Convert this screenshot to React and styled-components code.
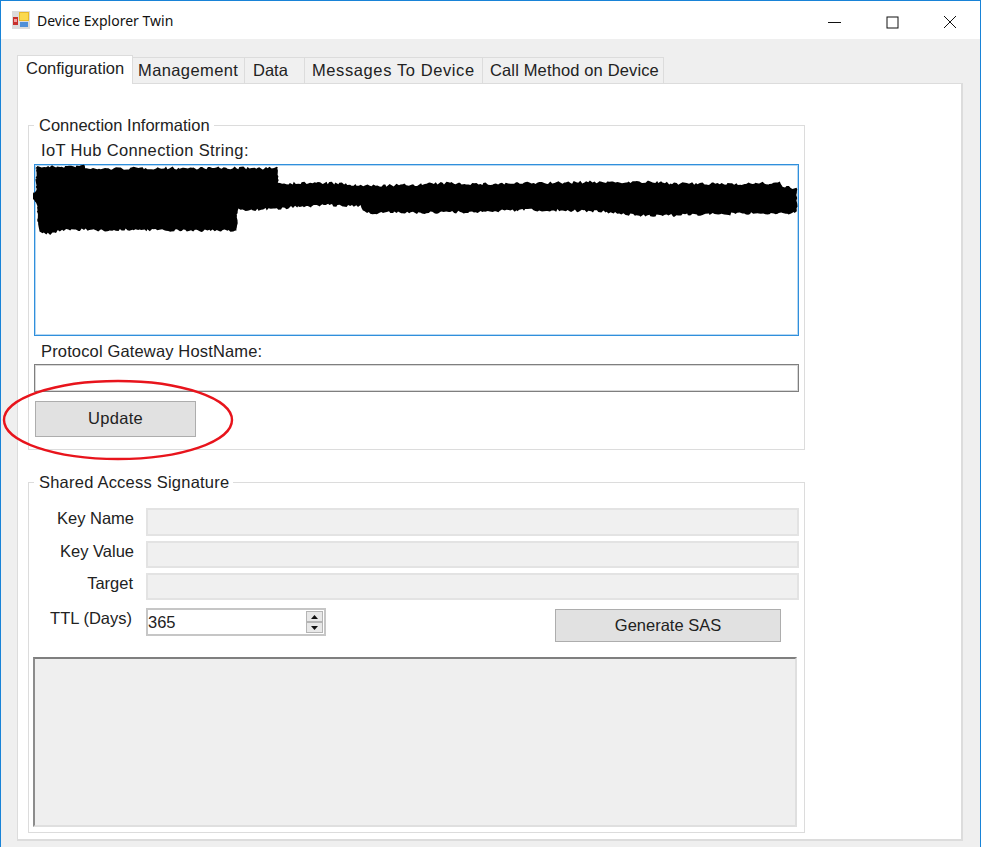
import React from 'react';
import styled, { createGlobalStyle } from 'styled-components';

const GlobalStyle = createGlobalStyle`
    html, body { margin: 0; padding: 0; background: #fff; }
    body { font-family: "Liberation Sans", Arial, sans-serif; font-size: 16px; color: #222; }
`;

const Window = styled.div`
    box-sizing: border-box;
    width: 981px;
    height: 847px;
    border: 1px solid #1883d7;
    border-bottom: none;
    background: #efefef;
    display: flex;
    flex-direction: column;
    overflow: hidden;
`;

const TitleBar = styled.div`
    height: 38px;
    background: #fff;
    display: flex;
    align-items: center;
    padding: 0 1px 0 11px;
    flex-shrink: 0;
`;

const Title = styled.span`
    margin-left: 7px;
    font-family: "Noto Sans", sans-serif;
    font-size: 14px;
    color: #111;
    flex: 1;
`;

const WinButton = styled.div`
    box-sizing: border-box;
    width: 58px;
    height: 38px;
    padding-top: 4px;
    display: flex;
    align-items: center;
    justify-content: center;
`;

const Body = styled.div`
    padding: 15px 18px 0 16px;
`;

const TabRow = styled.div`
    display: flex;
    align-items: flex-end;
    height: 29px;
`;

const Tab = styled.div`
    box-sizing: border-box;
    width: ${p => p.$w}px;
    height: ${p => (p.$active ? 29 : 26)}px;
    background: ${p => (p.$active ? '#fff' : '#f0f0f0')};
    border: 1px solid #dcdcdc;
    border-bottom: none;
    border-left-width: ${p => (p.$active || p.$first ? 1 : 0)}px;
    font-size: 16.5px;
    letter-spacing: ${p => p.$track || 0}px;
    line-height: ${p => (p.$active ? 25 : 24)}px;
    padding-left: ${p => p.$pad}px;
    white-space: nowrap;
    color: #222;
    position: relative;
    z-index: ${p => (p.$active ? 1 : 0)};
    margin-bottom: ${p => (p.$active ? -1 : 0)}px;
`;

const Panel = styled.div`
    box-sizing: border-box;
    width: 946px;
    height: 758px;
    background: #fff;
    border: 1px solid #dcdcdc;
    border-width: 1px 2px 2px 1px;
    padding: 32px 0 0 10px;
`;

const Group = styled.fieldset`
    box-sizing: border-box;
    width: 777px;
    height: ${p => p.$h}px;
    margin: ${p => p.$top}px 0 0;
    padding: 0 5px;
    border: 1px solid #dcdcdc;
    position: relative;
    display: flex;
    flex-direction: column;
`;

const Legend = styled.legend`
    margin-left: 0;
    padding: 0 4px 0 5px;
    font-size: 16.5px;
    letter-spacing: ${p => p.$track || 0}px;
    line-height: 18px;
    color: #222;
`;

const FieldLabel = styled.div`
    font-size: 16.5px;
    letter-spacing: ${p => p.$track || 0}px;
    line-height: 20px;
    margin-top: ${p => p.$top}px;
    padding-left: 7px;
    color: #222;
`;

const StringBox = styled.div`
    box-sizing: border-box;
    width: 765px;
    height: 172px;
    margin-top: 4px;
    background: #fff;
    border: 1px solid #2f8fdc;
    box-shadow: inset 0 0 0 1px rgba(47, 143, 220, 0.35);
    position: relative;
`;

const Redaction = styled.svg`
    position: absolute;
    left: -2px;
    top: -1px;
`;

const HostInput = styled.div`
    box-sizing: border-box;
    width: 765px;
    height: 28px;
    margin-top: 3px;
    background: #fff;
    border: 1px solid #7f7f7f;
    box-shadow: inset 0 0 0 1px rgba(127, 127, 127, 0.3);
`;

const Button = styled.div`
    box-sizing: border-box;
    width: ${p => p.$w}px;
    height: ${p => p.$h}px;
    margin-top: ${p => p.$top || 0}px;
    padding-bottom: ${p => p.$lift || 0}px;
    background: #e1e1e1;
    border: 1px solid #adadad;
    display: flex;
    align-items: center;
    justify-content: center;
    font-size: 16.5px;
    letter-spacing: ${p => p.$track || 0}px;
    color: #222;
`;

const UpdateRow = styled.div`
    margin: 9px 0 0 1px;
`;

const Ellipse = styled.svg`
    position: absolute;
    left: -31px;
    top: 239px;
    pointer-events: none;
`;

const FormRow = styled.div`
    display: grid;
    grid-template-columns: 100px 1fr;
    column-gap: 12px;
    align-items: center;
    height: ${p => p.$h}px;
    margin-top: ${p => p.$top}px;
    width: 765px;
`;

const RowLabel = styled.div`
    font-size: 16.5px;
    text-align: right;
    color: #222;
    white-space: nowrap;
    position: relative;
    top: ${p => p.$nudge || 0}px;
    left: ${p => p.$shift || 0}px;
`;

const ReadOnly = styled.div`
    box-sizing: border-box;
    height: ${p => p.$h}px;
    background: #f0f0f0;
    border: 2px solid #e3e3e3;
`;

const SpinRow = styled.div`
    display: flex;
    align-items: flex-start;
    justify-content: space-between;
    padding-right: 18px;
`;

const Spinner = styled.div`
    box-sizing: border-box;
    width: 180px;
    height: 28px;
    background: #fff;
    border: 2px solid #c6c6c6;
    display: flex;
    align-items: center;
    justify-content: space-between;
    padding-right: 1px;
    font-size: 16.5px;
    color: #222;
`;

const SpinButtons = styled.div`
    display: flex;
    flex-direction: column;
    width: 17px;
`;

const SpinButton = styled.div`
    height: 11px;
    background: #e8e8e8;
    border: 1px solid #b5b5b5;
    box-sizing: border-box;
    display: flex;
    align-items: center;
    justify-content: center;
`;

const Output = styled.div`
    box-sizing: border-box;
    width: 764px;
    height: 170px;
    margin: 15px 0 0 -1px;
    background: #efefef;
    border: 2px solid #dfdfdf;
    border-top-color: #7f7f7f;
    border-left-color: #8c8c8c;
`;

const tabs = [
    { label: 'Configuration', w: 116, pad: 8, active: true },
    { label: 'Management', w: 112, pad: 5, track: 0.4 },
    { label: 'Data', w: 60, pad: 8 },
    { label: 'Messages To Device', w: 178, pad: 7, track: 0.6 },
    { label: 'Call Method on Device', w: 181, pad: 7, track: 0.14 },
];

// scribbled-over connection string, outline in page coordinates
const blob = [
    [36, 167], [85, 166], [85, 169], [150, 168], [244, 168], [278, 168], [278, 183], [330, 183], [365, 186],
    [405, 185], [450, 183], [480, 184], [590, 182], [645, 182], [700, 184], [780, 183], [783, 187], [797, 188],
    [797, 213], [730, 214], [645, 216], [595, 211], [520, 210], [480, 212], [365, 213], [360, 206], [320, 205],
    [275, 209], [237, 210], [237, 231], [130, 230], [60, 230], [50, 234], [40, 232], [38, 225], [37, 205],
    [32, 197], [36, 190],
];

const roughen = points => {
    let seed = 7;
    const rnd = () => {
        seed = (seed * 16807) % 2147483647;
        return seed / 2147483647;
    };
    const out = [];
    points.forEach((p, i) => {
        const q = points[(i + 1) % points.length];
        const steps = Math.max(1, Math.round(Math.hypot(q[0] - p[0], q[1] - p[1]) / 2));
        for (let s = 0; s < steps; s++) {
            const t = s / steps;
            const x = p[0] - 33 + (q[0] - p[0]) * t + (rnd() - 0.5) * 1.5;
            const y = p[1] - 164 + (q[1] - p[1]) * t + (rnd() - 0.5) * 3;
            out.push(`${x.toFixed(1)},${y.toFixed(1)}`);
        }
    });
    return out.join(' ');
};

const AppIcon = () => (
    <svg width="18" height="18" viewBox="0 0 18 18">
        <rect x="0" y="0" width="18" height="18" fill="#dcdcdc" />
        <rect x="7" y="1" width="10" height="9" fill="#e8b92c" />
        <rect x="8" y="2" width="8" height="7" fill="#fbd94f" />
        <rect x="1" y="6" width="5" height="8" fill="#c8302c" />
        <rect x="2" y="8" width="3" height="3" fill="#f2a0a0" />
        <rect x="8" y="11" width="8" height="5" fill="#4f8fd8" />
    </svg>
);

const App = () => (
    <>
        <GlobalStyle />
        <Window>
            <TitleBar>
                <AppIcon />
                <Title>Device Explorer Twin</Title>
                <WinButton>
                    <svg width="13" height="13" viewBox="0 0 13 13"><path d="M0 6.5H13" stroke="#111" /></svg>
                </WinButton>
                <WinButton>
                    <svg width="13" height="13" viewBox="0 0 13 13"><rect x="1" y="1" width="11" height="11" fill="none" stroke="#111" /></svg>
                </WinButton>
                <WinButton>
                    <svg width="14" height="14" viewBox="0 0 14 14"><path d="M1 1L13 13M13 1L1 13" stroke="#111" /></svg>
                </WinButton>
            </TitleBar>
            <Body>
                <TabRow>
                    {tabs.map((t, i) => (
                        <Tab key={t.label} $w={t.w} $pad={t.pad} $track={t.track} $active={t.active} $first={i === 0}>{t.label}</Tab>
                    ))}
                </TabRow>
                <Panel>
                    <Group $h={334} $top={0}>
                        <Legend>Connection Information</Legend>
                        <FieldLabel $top={6} $track={0.35}>IoT Hub Connection String:</FieldLabel>
                        <StringBox>
                            <Redaction width="770" height="75" viewBox="0 0 770 75">
                                <defs>
                                    <filter id="scribble" x="-2%" y="-10%" width="104%" height="120%">
                                        <feGaussianBlur stdDeviation="0.7" />
                                    </filter>
                                </defs>
                                <polygon points={roughen(blob)} fill="#000" filter="url(#scribble)" />
                            </Redaction>
                        </StringBox>
                        <FieldLabel $top={5} $track={0.15}>Protocol Gateway HostName:</FieldLabel>
                        <HostInput />
                        <UpdateRow>
                            <Button $w={161} $h={36} $lift={2} $track={0.3}>Update</Button>
                        </UpdateRow>
                        <Ellipse width="240" height="100" viewBox="0 0 240 100">
                            <ellipse cx="120" cy="47" rx="114" ry="39" fill="none" stroke="#e8141c" strokeWidth="2.4" />
                        </Ellipse>
                    </Group>
                    <Group $h={360} $top={23}>
                        <Legend $track={0.22}>Shared Access Signature</Legend>
                        <FormRow $h={28} $top={17}>
                            <RowLabel $nudge={-4}>Key Name</RowLabel>
                            <ReadOnly $h={28} />
                        </FormRow>
                        <FormRow $h={27} $top={5}>
                            <RowLabel $nudge={-3}>Key Value</RowLabel>
                            <ReadOnly $h={27} />
                        </FormRow>
                        <FormRow $h={27} $top={5}>
                            <RowLabel $nudge={-3} $shift={-1}>Target</RowLabel>
                            <ReadOnly $h={27} />
                        </FormRow>
                        <FormRow $h={34} $top={8}>
                            <RowLabel $nudge={-7} $shift={-2}>TTL (Days)</RowLabel>
                            <SpinRow>
                                <Spinner>
                                    365
                                    <SpinButtons>
                                        <SpinButton><svg width="7" height="4" viewBox="0 0 7 4"><path d="M3.5 0L7 4H0Z" fill="#111" /></svg></SpinButton>
                                        <SpinButton><svg width="7" height="4" viewBox="0 0 7 4"><path d="M0 0H7L3.5 4Z" fill="#111" /></svg></SpinButton>
                                    </SpinButtons>
                                </Spinner>
                                <Button $w={226} $h={33} $top={1}>Generate SAS</Button>
                            </SpinRow>
                        </FormRow>
                        <Output />
                    </Group>
                </Panel>
            </Body>
        </Window>
    </>
);

export default App;
